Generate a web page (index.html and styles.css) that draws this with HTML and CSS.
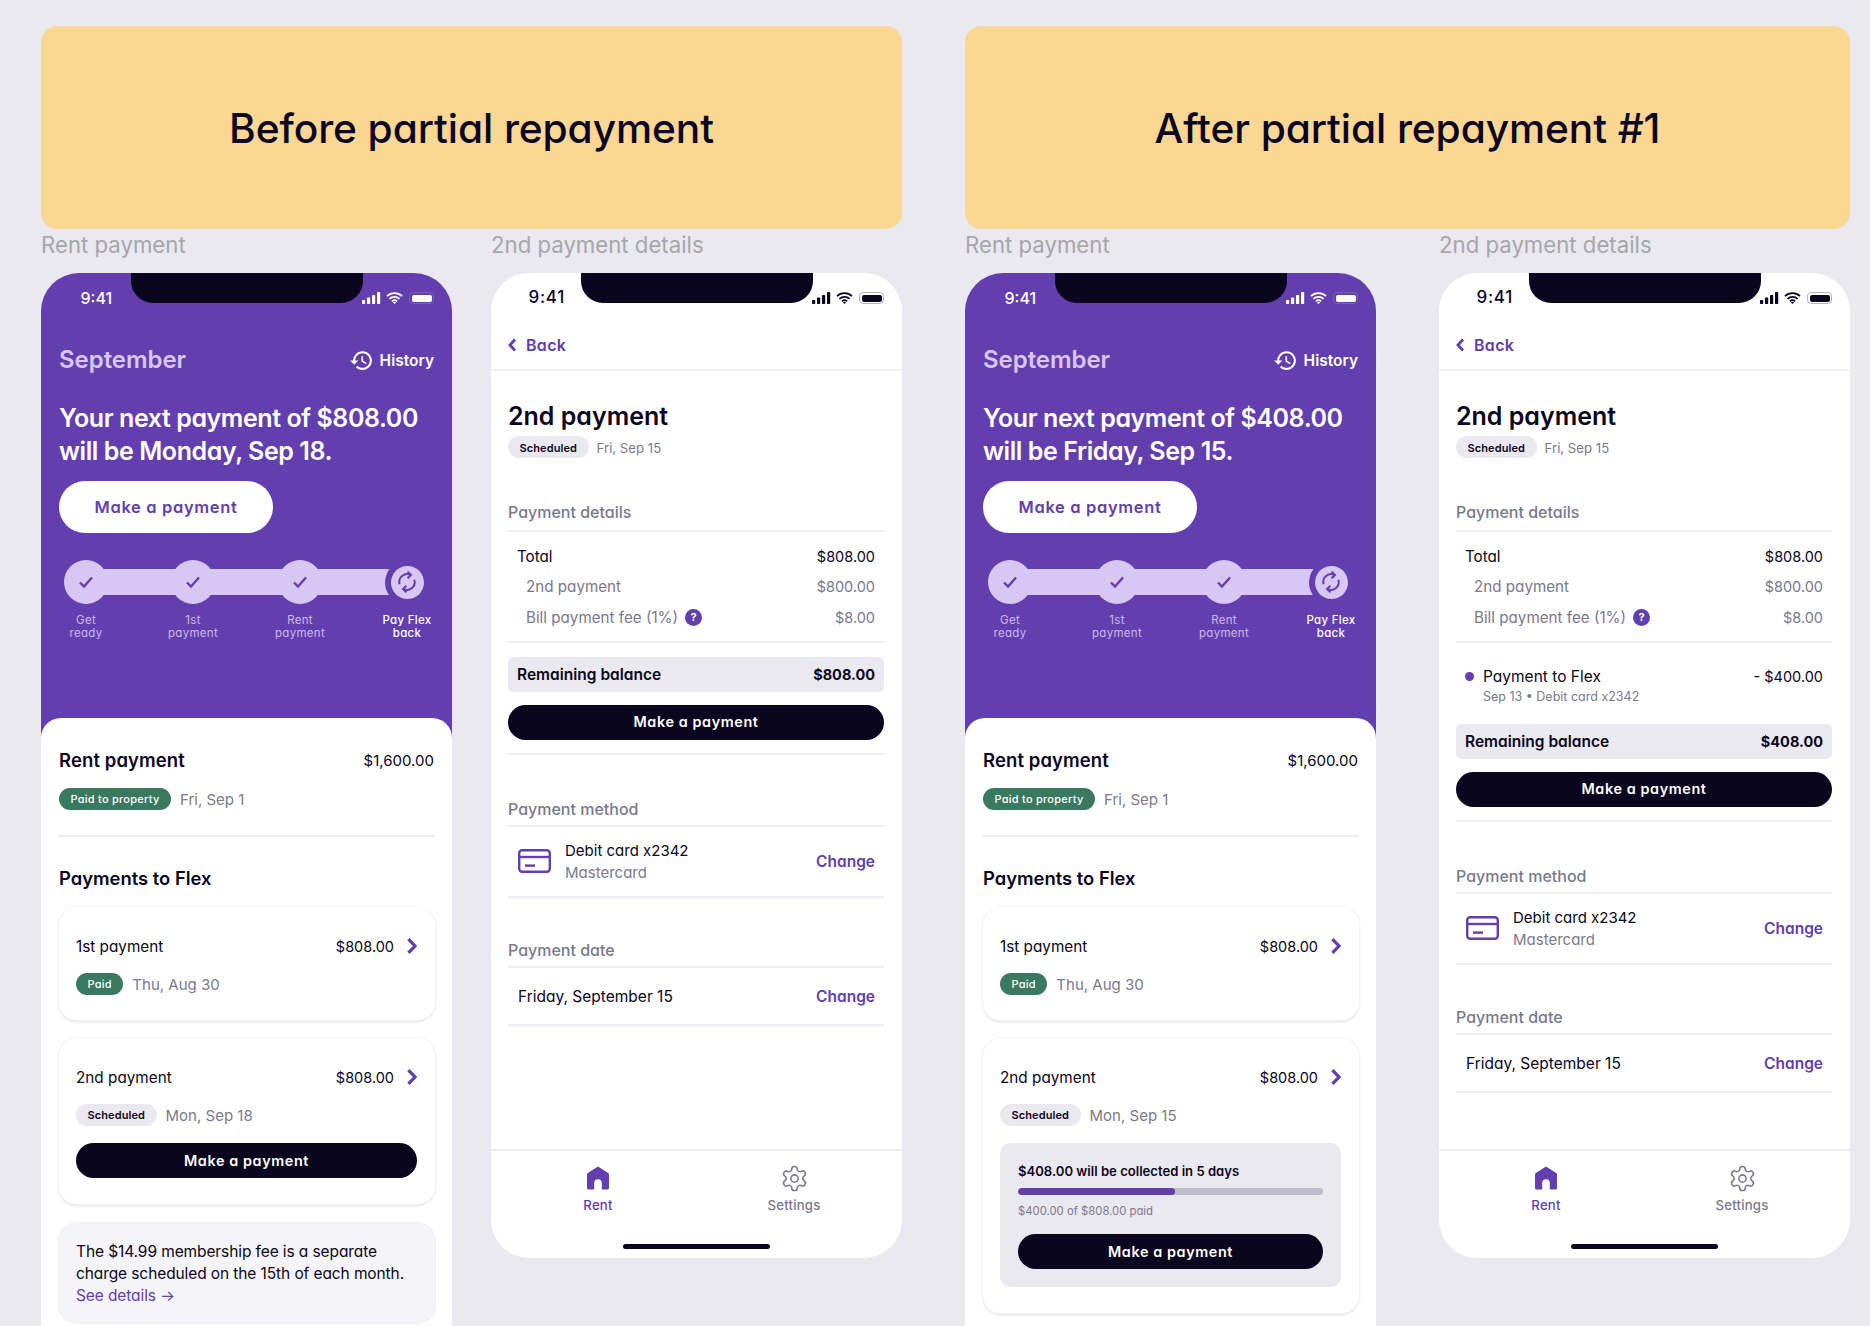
FILE: index.html
```html
<!DOCTYPE html>
<html lang="en">
<head>
<meta charset="utf-8">
<title>Partial repayment</title>
<link rel="stylesheet" href="styles.css">
</head>
<body>
<svg class="sprite" width="0" height="0" aria-hidden="true">
  <symbol id="i-signal" viewBox="0 0 19 12"><rect x="0" y="8" width="3.2" height="4" rx=".7"/><rect x="5" y="5.6" width="3.2" height="6.4" rx=".7"/><rect x="10" y="3" width="3.2" height="9" rx=".7"/><rect x="15" y="0" width="3.2" height="12" rx=".7"/></symbol>
  <symbol id="i-wifi" viewBox="0 0 17 12"><path d="M1 4.2a10.8 10.8 0 0 1 15 0M3.4 6.9a7.3 7.3 0 0 1 10.2 0M5.9 9.3a3.8 3.8 0 0 1 5.2 0" fill="none" stroke="currentColor" stroke-width="1.7"/><path d="M8.5 12 6.9 10.5a2.4 2.4 0 0 1 3.2 0z"/></symbol>
  <symbol id="i-history" viewBox="0 0 24 24"><path d="M13 3c-4.97 0-9 4.03-9 9H1l3.89 3.89.07.14L9 12H6c0-3.87 3.13-7 7-7s7 3.13 7 7-3.13 7-7 7c-1.93 0-3.68-.79-4.94-2.06l-1.42 1.42C8.27 19.99 10.51 21 13 21c4.97 0 9-4.03 9-9s-4.03-9-9-9zm-1 5v5l4.28 2.54.72-1.21-3.5-2.08V8H12z"/></symbol>
  <symbol id="i-check" viewBox="0 0 16 14"><path d="M2 7.5 6 11.5 14 2.5" fill="none" stroke="currentColor" stroke-width="2.4"/></symbol>
  <symbol id="i-sync" viewBox="0 0 24 24"><g fill="none" stroke="currentColor" stroke-width="2"><path d="M4.6 14.2A7.8 7.8 0 0 1 15.6 5"/><path d="M12.6 1.6 16 5l-3.4 3.2"/><path d="M19.4 9.8A7.8 7.8 0 0 1 8.4 19"/><path d="M11.4 22.4 8 19l3.4-3.2"/></g></symbol>
  <symbol id="i-chev" viewBox="0 0 10 16"><path d="M1.4 1.2 8 8l-6.6 6.8" fill="none" stroke="currentColor" stroke-width="3.2"/></symbol>
  <symbol id="i-back" viewBox="0 0 9 14"><path d="M7 1.5 2 7l5 5.5" fill="none" stroke="currentColor" stroke-width="2.8"/></symbol>
  <symbol id="i-card" viewBox="0 0 33 24"><rect x="1.2" y="1.2" width="30.6" height="21.6" rx="3" fill="none" stroke="currentColor" stroke-width="2.4"/><path d="M1.2 8h30.6" fill="none" stroke="currentColor" stroke-width="2.4"/><path d="M7 16.6h10" fill="none" stroke="currentColor" stroke-width="2.4"/></symbol>
  <symbol id="i-home" viewBox="0 0 24 24"><path d="M12 0.5 2.2 6.8A2 2 0 0 0 1 8.6V22a1.6 1.6 0 0 0 1.6 1.6h5.6V17a3.8 3.8 0 0 1 7.6 0v6.6h5.6A1.6 1.6 0 0 0 23 22V8.6a2 2 0 0 0-1.2-1.8z"/></symbol>
  <symbol id="i-gear" viewBox="0 0 24 24"><g fill="none" stroke="currentColor" stroke-width="1.3"><path d="M12.22 2h-.44a2 2 0 0 0-2 2v.18a2 2 0 0 1-1 1.73l-.43.25a2 2 0 0 1-2 0l-.15-.08a2 2 0 0 0-2.73.73l-.22.38a2 2 0 0 0 .73 2.73l.15.1a2 2 0 0 1 1 1.72v.51a2 2 0 0 1-1 1.74l-.15.09a2 2 0 0 0-.73 2.73l.22.38a2 2 0 0 0 2.73.73l.15-.08a2 2 0 0 1 2 0l.43.25a2 2 0 0 1 1 1.73V20a2 2 0 0 0 2 2h.44a2 2 0 0 0 2-2v-.18a2 2 0 0 1 1-1.73l.43-.25a2 2 0 0 1 2 0l.15.08a2 2 0 0 0 2.73-.73l.22-.39a2 2 0 0 0-.73-2.73l-.15-.08a2 2 0 0 1-1-1.74v-.5a2 2 0 0 1 1-1.74l.15-.09a2 2 0 0 0 .73-2.73l-.22-.38a2 2 0 0 0-2.73-.73l-.15.08a2 2 0 0 1-2 0l-.43-.25a2 2 0 0 1-1-1.73V4a2 2 0 0 0-2-2z"/><circle cx="12" cy="12" r="3"/></g></symbol>
</svg>

<main class="board">

<section class="group group-a">
  <div class="banner"><h1>Before partial repayment</h1></div>
  <div class="screens">
    <div class="screen-col">
      <p class="screen-label">Rent payment</p>
      <article class="phone phone-purple phone-tall">
        <div class="notch"></div>
        <div class="status status-light">
          <span class="clock">9:41</span>
          <span class="status-icons"><svg class="ic-signal"><use href="#i-signal"/></svg><svg class="ic-wifi"><use href="#i-wifi"/></svg><span class="battery"><span class="battery-fill"></span></span></span>
        </div>
        <div class="hero">
          <div class="hero-head"><span class="month">September</span><span class="history"><svg class="ic-history"><use href="#i-history"/></svg>History</span></div>
          <h2 class="hero-title">Your next payment of $808.00<br>will be Monday, Sep 18.</h2>
          <div class="btn-white">Make a payment</div>
        </div>
        <div class="stepper">
          <div class="stepper-bar"></div>
          <div class="step"><span class="step-dot"><svg class="ic-check"><use href="#i-check"/></svg></span><span class="step-label">Get<br>ready</span></div>
          <div class="step"><span class="step-dot"><svg class="ic-check"><use href="#i-check"/></svg></span><span class="step-label">1st<br>payment</span></div>
          <div class="step"><span class="step-dot"><svg class="ic-check"><use href="#i-check"/></svg></span><span class="step-label">Rent<br>payment</span></div>
          <div class="step step-current"><span class="step-dot"><svg class="ic-sync"><use href="#i-sync"/></svg></span><span class="step-label">Pay Flex<br>back</span></div>
        </div>
        <div class="sheet">
          <div class="rent-row"><span class="rent-title">Rent payment</span><span class="amount">$1,600.00</span></div>
          <div class="badge-row"><span class="badge badge-green">Paid to property</span><span class="date">Fri, Sep 1</span></div>
          <div class="rule rule-sheet"></div>
          <h3 class="flex-title">Payments to Flex</h3>
          <div class="pay-card">
            <div class="pay-row"><span>1st payment</span><span class="pay-right">$808.00<svg class="ic-chev"><use href="#i-chev"/></svg></span></div>
            <div class="badge-row"><span class="badge badge-green">Paid</span><span class="date">Thu, Aug 30</span></div>
          </div>
          <div class="pay-card">
            <div class="pay-row"><span>2nd payment</span><span class="pay-right">$808.00<svg class="ic-chev"><use href="#i-chev"/></svg></span></div>
            <div class="badge-row"><span class="badge badge-grey">Scheduled</span><span class="date">Mon, Sep 18</span></div>
            <div class="btn-dark btn-in-card">Make a payment</div>
          </div>
          <div class="note">The $14.99 membership fee is a separate charge scheduled on the 15th of each month. <span class="link">See details →</span></div>
        </div>
      </article>
    </div>

    <div class="screen-col">
      <p class="screen-label">2nd payment details</p>
      <article class="phone">
        <div class="notch"></div>
        <div class="status">
          <span class="clock clock-dark">9:41</span>
          <span class="status-icons"><svg class="ic-signal"><use href="#i-signal"/></svg><svg class="ic-wifi"><use href="#i-wifi"/></svg><span class="battery"><span class="battery-fill"></span></span></span>
        </div>
        <div class="backbar"><svg class="ic-back"><use href="#i-back"/></svg>Back</div>
        <div class="detail">
          <h2 class="detail-title">2nd payment</h2>
          <div class="badge-row badge-row-tight"><span class="badge badge-grey">Scheduled</span><span class="date date-small">Fri, Sep 15</span></div>
          <h4 class="sec-head sec-head-wide">Payment details</h4>
          <div class="lines">
            <div class="line"><span>Total</span><span class="val">$808.00</span></div>
            <div class="line line-sub"><span>2nd payment</span><span class="val">$800.00</span></div>
            <div class="line line-sub"><span class="fee">Bill payment fee (1%)<span class="help">?</span></span><span class="val">$8.00</span></div>
          </div>
          <div class="remaining remaining-first"><span>Remaining balance</span><span class="remaining-val">$808.00</span></div>
          <div class="btn-dark btn-wide">Make a payment</div>
          <div class="rule rule-after"></div>
          <h4 class="sec-head">Payment method</h4>
          <div class="method"><svg class="ic-card"><use href="#i-card"/></svg><div class="method-text"><span>Debit card x2342</span><span class="muted">Mastercard</span></div><span class="change">Change</span></div>
          <h4 class="sec-head">Payment date</h4>
          <div class="when"><span>Friday, September 15</span><span class="change">Change</span></div>
        </div>
        <nav class="tabbar">
          <div class="tab tab-active"><svg class="ic-tab"><use href="#i-home"/></svg>Rent</div>
          <div class="tab"><svg class="ic-tab ic-gear"><use href="#i-gear"/></svg>Settings</div>
        </nav>
        <div class="home-ind"></div>
      </article>
    </div>
  </div>
</section>

<section class="group group-b">
  <div class="banner"><h1>After partial repayment #1</h1></div>
  <div class="screens">
    <div class="screen-col">
      <p class="screen-label">Rent payment</p>
      <article class="phone phone-purple phone-tall">
        <div class="notch"></div>
        <div class="status status-light">
          <span class="clock">9:41</span>
          <span class="status-icons"><svg class="ic-signal"><use href="#i-signal"/></svg><svg class="ic-wifi"><use href="#i-wifi"/></svg><span class="battery"><span class="battery-fill"></span></span></span>
        </div>
        <div class="hero">
          <div class="hero-head"><span class="month">September</span><span class="history"><svg class="ic-history"><use href="#i-history"/></svg>History</span></div>
          <h2 class="hero-title">Your next payment of $408.00<br>will be Friday, Sep 15.</h2>
          <div class="btn-white">Make a payment</div>
        </div>
        <div class="stepper">
          <div class="stepper-bar"></div>
          <div class="step"><span class="step-dot"><svg class="ic-check"><use href="#i-check"/></svg></span><span class="step-label">Get<br>ready</span></div>
          <div class="step"><span class="step-dot"><svg class="ic-check"><use href="#i-check"/></svg></span><span class="step-label">1st<br>payment</span></div>
          <div class="step"><span class="step-dot"><svg class="ic-check"><use href="#i-check"/></svg></span><span class="step-label">Rent<br>payment</span></div>
          <div class="step step-current"><span class="step-dot"><svg class="ic-sync"><use href="#i-sync"/></svg></span><span class="step-label">Pay Flex<br>back</span></div>
        </div>
        <div class="sheet">
          <div class="rent-row"><span class="rent-title">Rent payment</span><span class="amount">$1,600.00</span></div>
          <div class="badge-row"><span class="badge badge-green">Paid to property</span><span class="date">Fri, Sep 1</span></div>
          <div class="rule rule-sheet"></div>
          <h3 class="flex-title">Payments to Flex</h3>
          <div class="pay-card">
            <div class="pay-row"><span>1st payment</span><span class="pay-right">$808.00<svg class="ic-chev"><use href="#i-chev"/></svg></span></div>
            <div class="badge-row"><span class="badge badge-green">Paid</span><span class="date">Thu, Aug 30</span></div>
          </div>
          <div class="pay-card">
            <div class="pay-row"><span>2nd payment</span><span class="pay-right">$808.00<svg class="ic-chev"><use href="#i-chev"/></svg></span></div>
            <div class="badge-row"><span class="badge badge-grey">Scheduled</span><span class="date">Mon, Sep 15</span></div>
            <div class="collect">
              <div class="collect-title">$408.00 will be collected in 5 days</div>
              <div class="progress"><div class="progress-fill" style="width:51.5%"></div></div>
              <div class="collect-sub">$400.00 of $808.00 paid</div>
              <div class="btn-dark">Make a payment</div>
            </div>
          </div>
        </div>
      </article>
    </div>

    <div class="screen-col">
      <p class="screen-label">2nd payment details</p>
      <article class="phone">
        <div class="notch"></div>
        <div class="status">
          <span class="clock clock-dark">9:41</span>
          <span class="status-icons"><svg class="ic-signal"><use href="#i-signal"/></svg><svg class="ic-wifi"><use href="#i-wifi"/></svg><span class="battery"><span class="battery-fill"></span></span></span>
        </div>
        <div class="backbar"><svg class="ic-back"><use href="#i-back"/></svg>Back</div>
        <div class="detail">
          <h2 class="detail-title">2nd payment</h2>
          <div class="badge-row badge-row-tight"><span class="badge badge-grey">Scheduled</span><span class="date date-small">Fri, Sep 15</span></div>
          <h4 class="sec-head sec-head-wide">Payment details</h4>
          <div class="lines">
            <div class="line"><span>Total</span><span class="val">$808.00</span></div>
            <div class="line line-sub"><span>2nd payment</span><span class="val">$800.00</span></div>
            <div class="line line-sub"><span class="fee">Bill payment fee (1%)<span class="help">?</span></span><span class="val">$8.00</span></div>
          </div>
          <div class="paid-row">
            <span class="paid-dot"></span>
            <div class="paid-text"><span>Payment to Flex</span><span class="paid-sub">Sep 13 • Debit card x2342</span></div>
            <span class="val">- $400.00</span>
          </div>
          <div class="remaining"><span>Remaining balance</span><span class="remaining-val">$408.00</span></div>
          <div class="btn-dark btn-wide">Make a payment</div>
          <div class="rule rule-after"></div>
          <h4 class="sec-head">Payment method</h4>
          <div class="method"><svg class="ic-card"><use href="#i-card"/></svg><div class="method-text"><span>Debit card x2342</span><span class="muted">Mastercard</span></div><span class="change">Change</span></div>
          <h4 class="sec-head">Payment date</h4>
          <div class="when"><span>Friday, September 15</span><span class="change">Change</span></div>
        </div>
        <nav class="tabbar">
          <div class="tab tab-active"><svg class="ic-tab"><use href="#i-home"/></svg>Rent</div>
          <div class="tab"><svg class="ic-tab ic-gear"><use href="#i-gear"/></svg>Settings</div>
        </nav>
        <div class="home-ind"></div>
      </article>
    </div>
  </div>
</section>

</main>
</body>
</html>
```

FILE: styles.css
```css
* { box-sizing: border-box; }
html, body { margin: 0; padding: 0; }
body {
  height: 1326px;
  overflow: hidden;
  background: #eae9f0;
  color: #0b0620;
  font-family: "Inter", "Noto Sans", sans-serif;
  font-feature-settings: "cv11" 1;
}
h1, h2, h3, h4, p { margin: 0; font-weight: inherit; font-size: inherit; }
.sprite { position: absolute; }
svg { display: block; fill: currentColor; }

.board { display: flex; gap: 63px; padding: 26px 20px 0 41px; }
.group-a { width: 861px; }
.group-b { width: 885px; }

.banner {
  height: 203px;
  padding-top: 2px;
  border-radius: 16px;
  background: #fbd794;
  display: flex;
  align-items: center;
  justify-content: center;
}
.banner h1 { font-size: 40.7px; font-weight: 500; letter-spacing: -.1px; line-height: 50px; }

.screens { display: flex; justify-content: space-between; }
.screen-col { width: 411px; }
.screen-label {
  font-size: 22.2px;
  line-height: 30px;
  margin: 1px 0 13px;
  color: #a6a6ab;
  font-feature-settings: normal;
}

.phone {
  position: relative;
  display: flex;
  flex-direction: column;
  width: 411px;
  height: 985px;
  background: #fff;
  border-radius: 38px;
  overflow: hidden;
}
.phone-tall { height: 1100px; border-radius: 38px 38px 0 0; }
.phone-purple { background: #633eae; display: block; }

.notch {
  position: absolute;
  top: 0;
  left: 89.5px;
  width: 232px;
  height: 30px;
  background: #0b0620;
  border-radius: 0 0 22px 22px;
}

.status {
  height: 50px;
  padding: 0 18px 0 39.5px;
  display: flex;
  align-items: center;
  justify-content: space-between;
  color: #0b0620;
}
.status-light { color: #fff; }
.clock { font-size: 16px; font-weight: 500; }
.clock-dark { font-size: 17px; letter-spacing: .7px; margin: -3px 0 0 -2px; }
.status-icons { display: flex; align-items: center; gap: 5px; }
.ic-signal { width: 19px; height: 12px; }
.ic-wifi { width: 17px; height: 12px; margin-top: -1px; }
.battery {
  width: 25px;
  height: 12px;
  padding: 1.5px;
  margin-left: 1px;
  border: 1px solid rgba(128, 128, 150, .6);
  border-radius: 4px;
  display: flex;
}
.battery-fill { flex: 1; background: currentColor; border-radius: 2px; }

.hero { padding: 22px 18px 0; }
.hero-head { height: 28px; display: flex; align-items: center; justify-content: space-between; }
.month { font-size: 24px; font-weight: 600; letter-spacing: -.05px; color: #d8c6f3; }
.history { display: flex; align-items: center; gap: 6px; margin-top: 2px; font-size: 15.5px; font-weight: 600; color: #fff; }
.ic-history { width: 25px; height: 25px; }
.hero-title {
  margin-top: 29px;
  font-size: 25px;
  line-height: 33px;
  font-weight: 600;
  letter-spacing: -.42px;
  color: #fff;
  white-space: nowrap;
}
.btn-white {
  margin-top: 13px;
  width: 214px;
  height: 52px;
  border-radius: 26px;
  background: #fff;
  color: #633eae;
  font-size: 16.5px;
  font-weight: 600;
  letter-spacing: .65px;
  display: flex;
  align-items: center;
  justify-content: center;
}

.stepper {
  position: relative;
  display: grid;
  grid-template-columns: repeat(4, 90px);
  gap: 17px;
  margin-top: 27px;
}
.stepper-bar {
  position: absolute;
  left: 45px;
  width: 305px;
  top: 9px;
  height: 26px;
  background: #d8c6f3;
}
.step { position: relative; display: flex; flex-direction: column; align-items: center; }
.step-dot {
  width: 44px;
  height: 44px;
  border-radius: 50%;
  background: #d8c6f3;
  color: #633eae;
  display: flex;
  align-items: center;
  justify-content: center;
}
.ic-check { width: 16px; height: 14px; }
.step-current .step-dot {
  width: 33px;
  height: 33px;
  margin: 5.5px 0;
  box-shadow: 0 0 0 6px #633eae;
}
.ic-sync { width: 24px; height: 24px; }
.step-label {
  margin-top: 10px;
  font-size: 11.5px;
  line-height: 13px;
  letter-spacing: .3px;
  text-align: center;
  color: #cdb9ee;
}
.step-current .step-label { margin-top: 10px; color: #fff; font-weight: 500; }

.sheet {
  margin-top: 78px;
  height: 620px;
  padding: 30px 17px 0 18px;
  border-radius: 20px 20px 0 0;
  background: #fff;
  color: #0b0620;
}
.rent-row { height: 24px; padding-right: 1px; display: flex; align-items: center; justify-content: space-between; }
.rent-title { font-size: 18.5px; font-weight: 600; letter-spacing: .1px; }
.amount { font-size: 15px; }
.badge-row { margin-top: 16px; display: flex; align-items: center; gap: 9px; }
.badge {
  height: 22px;
  padding: 0 11.5px;
  border-radius: 11px;
  display: flex;
  align-items: center;
  font-size: 11px;
  font-weight: 500;
  letter-spacing: .25px;
}
.badge-green { background: #39795f; color: #fff; }
.badge-grey { background: #eae9f0; color: #0b0620; font-weight: 600; letter-spacing: .1px; }
.date { font-size: 15px; color: #7b798c; }
.rule { height: 2px; background: #eeedf3; }
.rule-sheet { margin-top: 25px; }
.flex-title { margin-top: 29px; height: 24px; line-height: 24px; font-size: 18.4px; font-weight: 600; }

.pay-card {
  margin-top: 18px;
  padding: 28px 18px 25px 17px;
  border-radius: 18px;
  background: #fff;
  box-shadow: 0 0 0 1px #f3f3f6, 0 2px 3px rgba(11, 6, 32, .12);
}
.flex-title + .pay-card { margin-top: 17px; }
.pay-row { height: 22px; display: flex; align-items: center; justify-content: space-between; font-size: 15.3px; }
.pay-right { display: flex; align-items: center; gap: 13px; font-size: 14.5px; }
.ic-chev { width: 10px; height: 16px; color: #633eae; }
.btn-dark {
  height: 35px;
  padding-bottom: 1px;
  border-radius: 18px;
  background: #0b0620;
  color: #fff;
  font-size: 14.4px;
  font-weight: 600;
  letter-spacing: .6px;
  display: flex;
  align-items: center;
  justify-content: center;
}
.btn-in-card { margin: 17px 0 1px; }
.note {
  margin-top: 19px;
  height: 100px;
  padding: 18px 17px 0;
  border-radius: 18px;
  background: #f5f5f9;
  box-shadow: 0 0 0 1px #efeff3;
  font-size: 15.5px;
  line-height: 22px;
  letter-spacing: -.1px;
}
.link { color: #633eae; }

.collect {
  margin: 17px 0 1px;
  height: 144px;
  padding: 18px;
  border-radius: 10px;
  background: #eae9f0;
}
.collect-title { font-size: 13.1px; line-height: 20px; font-weight: 600; }
.progress { margin-top: 7px; height: 7px; border-radius: 4px; background: #bfbdcc; overflow: hidden; }
.progress-fill { height: 100%; border-radius: 4px; background: #633eae; }
.collect-sub { margin-top: 7px; font-size: 11.3px; line-height: 18px; color: #7b798c; }
.collect .btn-dark { margin-top: 14px; }

.backbar {
  height: 48px;
  padding: 10px 17px 12px;
  border-bottom: 2px solid #f2f1f6;
  display: flex;
  align-items: center;
  gap: 9px;
  font-size: 16px;
  font-weight: 600;
  letter-spacing: .3px;
  color: #633eae;
}
.ic-back { width: 9px; height: 14px; }

.detail { padding: 0 18px 0 17px; }
.detail-title { margin-top: 28px; height: 34px; line-height: 34px; font-size: 25px; font-weight: 600; }
.badge-row-tight { margin-top: 3px; gap: 8px; }
.badge-row-tight .badge { padding-top: 1px; }
.date-small { font-size: 13.2px; margin-top: 1px; }
.sec-head {
  margin-top: 44px;
  height: 28px;
  line-height: 20px;
  padding-bottom: 6px;
  border-bottom: 2px solid #eeedf3;
  font-size: 16px;
  font-weight: 500;
  color: #7b798c;
}
.sec-head-wide { height: 30px; padding-bottom: 8px; }
.method + .sec-head { margin-top: 42px; height: 28px; padding-bottom: 6px; }
.lines { padding: 9px 9px 8px; border-bottom: 2px solid #eeedf3; }
.line { height: 30.5px; display: flex; align-items: center; justify-content: space-between; font-size: 15.2px; }
.val { font-size: 14.5px; }
.line-sub { padding-left: 9px; color: #7b798c; }
.fee { display: flex; align-items: center; gap: 7px; }
.help {
  width: 17px;
  height: 17px;
  border-radius: 50%;
  background: #633eae;
  color: #fff;
  font-size: 11px;
  font-weight: 700;
  display: flex;
  align-items: center;
  justify-content: center;
}
.remaining {
  height: 35px;
  padding: 0 9px;
  border-radius: 5px;
  background: #eae9f0;
  display: flex;
  align-items: center;
  justify-content: space-between;
  font-size: 15.5px;
  font-weight: 600;
}
.remaining-val { font-size: 14.5px; font-weight: 700; }
.remaining-first { margin-top: 14px; }
.btn-wide { margin-top: 13px; }
.rule-after { margin-top: 13px; }

.paid-row {
  display: flex;
  align-items: flex-start;
  padding: 23px 9px 18px;
  font-size: 15.5px;
  line-height: 22px;
}
.paid-dot { width: 9px; height: 9px; margin: 6.5px 9px 0 0; border-radius: 50%; background: #633eae; }
.paid-text { flex: 1; display: flex; flex-direction: column; }
.paid-sub { font-size: 12.5px; line-height: 18px; color: #7b798c; }

.method {
  height: 71px;
  padding: 0 9px 0 10px;
  border-bottom: 2px solid #eeedf3;
  display: flex;
  align-items: center;
  font-size: 15px;
}
.ic-card { width: 33px; height: 24px; color: #633eae; margin-right: 14px; }
.method-text { flex: 1; display: flex; flex-direction: column; line-height: 22px; margin-top: 1px; }
.muted { color: #7b798c; }
.change { font-size: 15.5px; font-weight: 600; color: #633eae; }
.when {
  height: 58px;
  padding: 1px 9px 0 10px;
  border-bottom: 2px solid #eeedf3;
  display: flex;
  align-items: center;
  justify-content: space-between;
  font-size: 15.5px;
}

.tabbar {
  margin-top: auto;
  padding: 15px 10px 0 9px;
  border-top: 2px solid #eeedf0;
  display: flex;
}
.tab {
  flex: 1;
  display: flex;
  flex-direction: column;
  align-items: center;
  gap: 7px;
  font-size: 13.2px;
  line-height: 16px;
  font-weight: 500;
  letter-spacing: .2px;
  color: #7b798c;
}
.tab-active { color: #633eae; }
.ic-tab { width: 24px; height: 24px; }
.ic-gear { width: 29px; height: 29px; margin: -2.5px; }
.home-ind {
  flex: none;
  width: 147px;
  height: 5px;
  margin: 31px auto 9px;
  border-radius: 3px;
  background: #0b0620;
}
```
